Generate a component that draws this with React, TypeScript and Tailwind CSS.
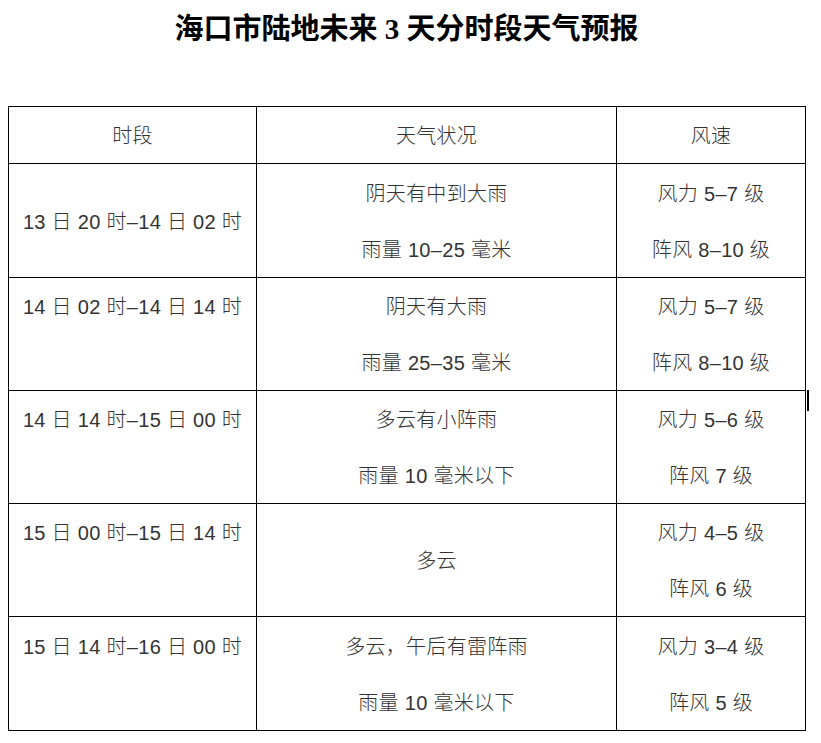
const bodyFont = {
  fontFamily: '"Liberation Sans", "Noto Sans CJK SC", sans-serif',
};

type Row = {
  time: string;
  timeCentered: boolean;
  weather: string[];
  wind: string[];
};

const rows: Row[] = [
  {
    time: "13 日 20 时–14 日 02 时",
    timeCentered: true,
    weather: ["阴天有中到大雨", "雨量 10–25 毫米"],
    wind: ["风力 5–7 级", "阵风 8–10 级"],
  },
  {
    time: "14 日 02 时–14 日 14 时",
    timeCentered: false,
    weather: ["阴天有大雨", "雨量 25–35 毫米"],
    wind: ["风力 5–7 级", "阵风 8–10 级"],
  },
  {
    time: "14 日 14 时–15 日 00 时",
    timeCentered: false,
    weather: ["多云有小阵雨", "雨量 10 毫米以下"],
    wind: ["风力 5–6 级", "阵风 7 级"],
  },
  {
    time: "15 日 00 时–15 日 14 时",
    timeCentered: false,
    weather: ["多云"],
    wind: ["风力 4–5 级", "阵风 6 级"],
  },
  {
    time: "15 日 14 时–16 日 00 时",
    timeCentered: false,
    weather: ["多云，午后有雷阵雨", "雨量 10 毫米以下"],
    wind: ["风力 3–4 级", "阵风 5 级"],
  },
];

function Cell(props: { lines: string[] }) {
  return (
    <div className="flex flex-col justify-center items-center border-r border-b border-black">
      {props.lines.map((line, i) => (
        <div key={i} className="h-[56px] leading-[58px] whitespace-pre">
          {line}
        </div>
      ))}
    </div>
  );
}

export default function App() {
  return (
    <div
      className="relative w-[821px] h-[743px] bg-white text-[20px] font-light tracking-[0.3px] text-[#333]"
      style={bodyFont}
    >
      <h1
        className="h-[60px] pr-[8px] flex items-center justify-center text-[29px] font-bold tracking-normal text-black"
        style={{ fontFamily: '"Liberation Serif", "Noto Sans CJK SC", serif' }}
      >
        海口市陆地未来 3 天分时段天气预报
      </h1>

      <div className="ml-[8px] mt-[46px] w-[798px] grid grid-cols-[248px_360px_189px] grid-rows-[57px_114px_113px_113px_113px_114px] border-l border-t border-black">
        <Cell lines={["时段"]} />
        <Cell lines={["天气状况"]} />
        <Cell lines={["风速"]} />
        {rows.map((row, i) => (
          <div key={i} className="contents">
            <Cell lines={row.timeCentered ? [row.time] : [row.time, " "]} />
            <Cell lines={row.weather} />
            <Cell lines={row.wind} />
          </div>
        ))}
      </div>

      {/* text cursor left on the page */}
      <div className="absolute left-[807px] top-[390px] w-[2px] h-[21px] bg-black" />
    </div>
  );
}
